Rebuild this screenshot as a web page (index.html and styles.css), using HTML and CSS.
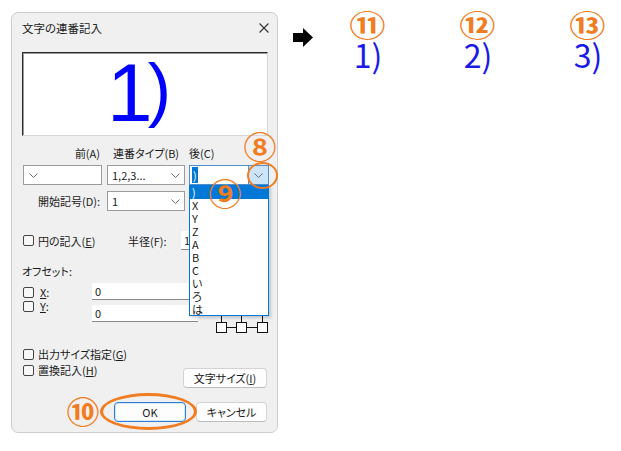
FILE: index.html
```html
<!DOCTYPE html>
<html lang="ja">
<head>
    <meta charset="UTF-8">
    <title>文字の連番記入</title>
    <link rel="stylesheet" href="styles.css">
</head>
<body>
    <div class="page">
        <div class="dialog">
            <div class="titlebar">
                <span class="title">文字の連番記入</span>
                <svg class="close" width="10" height="10" viewBox="0 0 10 10">
                    <path d="M0.5 0.5 L9.5 9.5 M9.5 0.5 L0.5 9.5" stroke="#333" stroke-width="1.1" fill="none"/>
                </svg>
            </div>

            <div class="dialog-body">
                <div class="preview"><span class="preview-num">1</span><span class="preview-paren">)</span></div>

                <div class="row labels">
                    <span class="cell-a">前(A)</span>
                    <span class="cell-b">連番タイプ(B)</span>
                    <span class="cell-c">後(C)</span>
                </div>

                <div class="row combos">
                    <div class="combo cell-a">
                        <svg class="chev" width="9" height="5" viewBox="0 0 9 5"><path d="M0.5 0.5 L4.5 4.5 L8.5 0.5"/></svg>
                        <span></span>
                    </div>
                    <div class="combo cell-b">
                        <span>1,2,3...</span>
                        <svg class="chev" width="9" height="5" viewBox="0 0 9 5"><path d="M0.5 0.5 L4.5 4.5 L8.5 0.5"/></svg>
                    </div>
                    <div class="combo combo-focus cell-c">
                        <span class="combo-edit"><span class="sel">)</span></span>
                        <span class="combo-btn">
                            <svg class="chev" width="9" height="5" viewBox="0 0 9 5"><path d="M0.5 0.5 L4.5 4.5 L8.5 0.5"/></svg>
                        </span>
                    </div>
                </div>

                <div class="row start">
                    <span class="cell-a label-right">開始記号(D):</span>
                    <div class="combo cell-b">
                        <span>1</span>
                        <svg class="chev" width="9" height="5" viewBox="0 0 9 5"><path d="M0.5 0.5 L4.5 4.5 L8.5 0.5"/></svg>
                    </div>
                </div>

                <div class="row circle">
                    <label class="check circle-check"><span class="box"></span>円の記入(<u>E</u>)</label>
                    <span class="radius-label">半径(F):</span>
                    <span class="edit radius-edit">1</span>
                </div>

                <div class="offset-title">オフセット:</div>

                <div class="row offset">
                    <div class="offset-checks">
                        <label class="check"><span class="box"></span><u>X</u>:</label>
                        <label class="check"><span class="box"></span><u>Y</u>:</label>
                    </div>
                    <div class="offset-edits">
                        <span class="edit">0</span>
                        <span class="edit">0</span>
                    </div>
                    <svg class="diagram" width="53" height="51" viewBox="0 0 53 51">
                        <g fill="none" stroke="#111" stroke-width="1">
                            <path d="M5.5 0 V39.5 M25.5 0 V39.5 M46.5 0 V39.5 M10.5 44.5 H20.5 M30.5 44.5 H41.5"/>
                            <rect x="0.5" y="39.5" width="10" height="10" fill="#fff"/>
                            <rect x="20.5" y="39.5" width="10" height="10" fill="#fff"/>
                            <rect x="41.5" y="39.5" width="10" height="10" fill="#fff"/>
                        </g>
                    </svg>
                </div>

                <div class="row output">
                    <div class="output-checks">
                        <label class="check"><span class="box"></span>出力サイズ指定(<u>G</u>)</label>
                        <label class="check"><span class="box"></span>置換記入(<u>H</u>)</label>
                    </div>
                    <button class="btn size-btn">文字サイズ(<u>I</u>)</button>
                </div>

                <div class="row buttons">
                    <button class="btn btn-default ok-btn">OK</button>
                    <button class="btn cancel-btn">キャンセル</button>
                </div>
            </div>

            <ul class="droplist">
                <li class="active">)</li>
                <li>X</li>
                <li>Y</li>
                <li>Z</li>
                <li>A</li>
                <li>B</li>
                <li>C</li>
                <li>い</li>
                <li>ろ</li>
                <li>は</li>
            </ul>

            <!-- annotations -->
            <span class="ring ring-drop"></span>
            <span class="ring ring-ok"></span>
            <span class="mark mark-8">⑧</span>
            <span class="mark mark-9">⑨</span>
            <span class="mark mark-10">⑩</span>
        </div>

        <svg class="arrow" width="20" height="19" viewBox="0 0 20 19">
            <polygon points="0,5 10,5 10,0 20,9.5 10,19 10,14 0,14" fill="#000"/>
        </svg>

        <div class="results">
            <div class="result">
                <span class="result-mark">⑪</span>
                <span class="result-value">1)</span>
            </div>
            <div class="result">
                <span class="result-mark">⑫</span>
                <span class="result-value">2)</span>
            </div>
            <div class="result">
                <span class="result-mark">⑬</span>
                <span class="result-value">3)</span>
            </div>
        </div>
    </div>
</body>
</html>
```

FILE: styles.css
```css
body {
    margin: 0;
    background: #fff;
    font-family: "Noto Sans CJK JP", sans-serif;
    font-size: 11px;
    color: #1a1a1a;
    font-feature-settings: "palt";
}
.page {
    display: flex;
    align-items: flex-start;
}

/* dialog */
.dialog {
    position: relative;
    margin: 12px 0 0 11px;
    width: 267px;
    height: 421px;
    box-sizing: border-box;
    border: 1px solid #cdcdcd;
    border-radius: 7px;
    background: #f0f0f0;
    flex-shrink: 0;
}
.titlebar {
    height: 29px;
    display: flex;
    align-items: center;
    justify-content: space-between;
    padding: 0 8px 0 10px;
}
.title {
    font-size: 11.5px;
    color: #222;
}
.dialog-body {
    padding: 10px 0 0 10px;
}
.preview {
    width: 246px;
    height: 84px;
    box-sizing: border-box;
    background: #fff;
    border: 1px solid;
    border-color: #2a2a2a #d8d8d8 #d8d8d8 #2a2a2a;
    box-shadow: inset 1px 1px 0 #9a9a9a;
    text-align: center;
    padding-right: 12px;
    font-family: "Liberation Sans", Arial, sans-serif;
    font-size: 82px;
    line-height: 80px;
    color: #0000ff;
    font-feature-settings: normal;
}
.preview-num {
    letter-spacing: -5px;
}
.preview-paren {
    font-size: 70px;
    line-height: 40px;
    vertical-align: 8px;
}

.row {
    display: flex;
    margin-left: 1px;
}
.cell-a { width: 79px; }
.cell-b { width: 78px; margin-left: 5px; }
.cell-c { width: 80px; margin-left: 4px; }

.labels {
    margin-top: 9px;
    height: 16px;
    line-height: 16px;
}
.labels .cell-a { text-align: right; padding-right: 2px; box-sizing: border-box; }
.labels .cell-b { padding-left: 6px; box-sizing: border-box; }

.combos { margin-top: 4px; }
.combo {
    box-sizing: border-box;
    height: 20px;
    background: #fff;
    border: 1px solid #9b9b9b;
    display: flex;
    align-items: center;
    justify-content: space-between;
    padding: 0 4px 0 4px;
}
.combos .cell-a { padding-left: 5px; }
.chev path {
    fill: none;
    stroke: #6a6a6a;
    stroke-width: 1;
}
.combo-focus {
    padding: 0;
    border-color: #4d8fd0;
}
.combo-edit {
    flex: 1;
    padding-left: 2px;
}
.sel {
    background: #0078d7;
    color: #fff;
    padding: 0 1px;
}
.combo-btn {
    width: 20px;
    height: 18px;
    box-sizing: border-box;
    background: #cce4f7;
    border-left: 1px solid #4d8fd0;
    display: flex;
    align-items: center;
    justify-content: center;
}

.start {
    margin-top: 6px;
    height: 20px;
    align-items: center;
}
.label-right {
    text-align: right;
    padding-right: 2px;
    box-sizing: border-box;
}

/* checkboxes */
.check {
    display: flex;
    align-items: center;
    white-space: nowrap;
}
.box {
    width: 11px;
    height: 11px;
    box-sizing: border-box;
    border: 1px solid #444;
    border-radius: 2px;
    background: #f7f7f7;
    margin-right: 4px;
    flex-shrink: 0;
}

.edit {
    box-sizing: border-box;
    background: #fff;
    border-bottom: 1px solid #8a8a8a;
    padding-left: 3px;
    display: flex;
    align-items: center;
}

.circle {
    margin-top: 20px;
    height: 19px;
    align-items: center;
}
.circle-check { width: 105px; }
.radius-label { width: 53px; }
.radius-edit {
    width: 40px;
    height: 19px;
}

.offset-title {
    margin-top: 13px;
    height: 16px;
    line-height: 16px;
}

.offset {
    margin-top: 4px;
    align-items: flex-start;
}
.offset-checks {
    width: 69px;
    padding-top: 4px;
    display: flex;
    flex-direction: column;
    gap: 3px;
}
.offset-checks .check {
    height: 11px;
    line-height: 11px;
}
.offset-checks .box { margin-right: 6px; }
.offset-edits {
    width: 106px;
    display: flex;
    flex-direction: column;
    gap: 5px;
}
.offset-edits .edit { height: 17px; }
.diagram {
    margin-left: 18px;
    display: block;
}

.output {
    margin-top: 12px;
    align-items: flex-start;
}
.output-checks {
    display: flex;
    flex-direction: column;
}
.output-checks .check {
    height: 16px;
}
.btn {
    font-family: inherit;
    font-size: 11px;
    font-feature-settings: "palt";
    color: #1a1a1a;
    height: 20px;
    box-sizing: border-box;
    background: #fdfdfd;
    border: 1px solid #d3d3d3;
    border-bottom-color: #bdbdbd;
    border-radius: 4px;
    padding: 0;
    line-height: 18px;
}
.size-btn {
    width: 84px;
    margin: 22px 10px 0 auto;
}
.buttons {
    margin-top: 14px;
    justify-content: flex-end;
    gap: 10px;
    padding-right: 10px;
}
.ok-btn { width: 72px; }
.cancel-btn { width: 71px; }
.btn-default {
    border: 1px solid #2a7fd4;
    box-shadow: inset 0 0 0 1px #d6e8f8;
}

/* opened list of the 後(C) combo */
.droplist {
    position: absolute;
    left: 177px;
    top: 172px;
    width: 80px;
    height: 131px;
    box-sizing: border-box;
    margin: 0;
    padding: 0;
    list-style: none;
    background: #fff;
    border: 1px solid #0078d7;
    box-shadow: 2px 2px 3px rgba(0, 0, 0, 0.18);
}
.droplist li {
    height: 13px;
    line-height: 13px;
    padding-left: 2px;
}
.droplist li.active {
    background: #0078d7;
    color: #fff;
}

/* orange annotations */
.ring {
    position: absolute;
    box-sizing: border-box;
    border: 2.5px solid #f07d22;
    border-radius: 50%;
}
.ring-drop {
    left: 235px;
    top: 149px;
    width: 31px;
    height: 27px;
}
.ring-ok {
    left: 88px;
    top: 380px;
    width: 97px;
    height: 37px;
    border-width: 3px;
}
.mark {
    position: absolute;
    width: 30px;
    text-align: center;
    font-size: 30px;
    line-height: 30px;
    color: #f07d22;
    font-weight: bold;
    transform: scaleX(1.1);
}
.mark-8 { left: 233px; top: 117px; }
.mark-9 { left: 198px; top: 164px; }
.mark-10 { left: 56px; top: 382px; }

/* result side */
.arrow {
    margin: 28px 0 0 15px;
    flex-shrink: 0;
}
.results {
    display: flex;
}
.result {
    width: 110px;
    display: flex;
    flex-direction: column;
    align-items: center;
}
.result-mark {
    margin-top: 11px;
    font-size: 29px;
    line-height: 26px;
    color: #f07d22;
    font-weight: bold;
    transform: scaleX(1.25);
}
.result-value {
    margin-top: 1px;
    font-size: 32px;
    line-height: 32px;
    color: #1a1ae6;
    font-feature-settings: normal;
}
```
